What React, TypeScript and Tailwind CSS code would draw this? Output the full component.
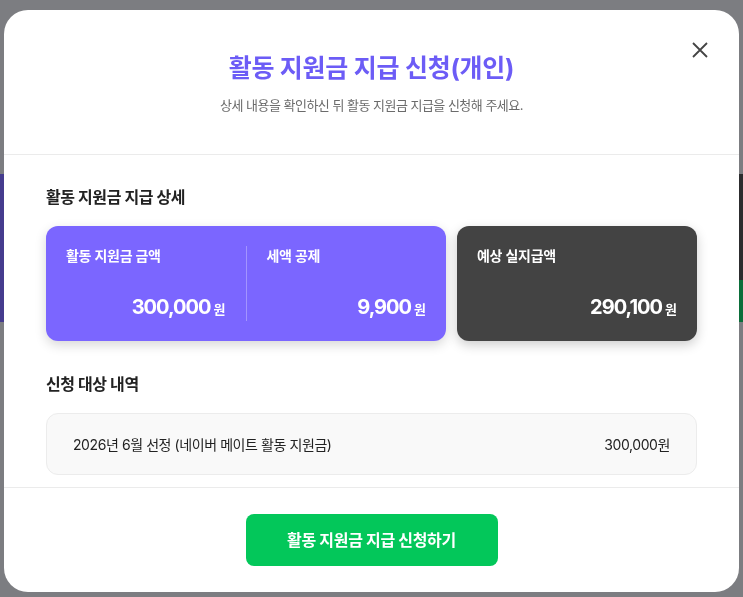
import { useState } from "react";

const font = { fontFamily: 'Inter, "Noto Sans CJK KR", sans-serif' };

function Amount({ value }: { value: string }) {
    return (
        <div className="flex items-baseline justify-end">
            <span className="text-[20px] font-bold tracking-[-0.05em] leading-7">{value}</span>
            <span className="ml-[3px] text-[13px] font-semibold">원</span>
        </div>
    );
}

export default function App() {
    const [open, setOpen] = useState(true);

    return (
        <div className="relative h-screen overflow-hidden bg-[#7c7d81]" style={font}>
            {/* dimmed page behind the modal */}
            <div className="mt-[174px] flex h-[148px]">
                <div className="flex-1 bg-[#453c8e]" />
                <div className="flex flex-1 flex-col bg-[#2c2c2e]">
                    <div className="flex-1" />
                    <div className="h-[42px] bg-[#0b6e3a]" />
                </div>
            </div>

            {open && (
                <div className="fixed inset-0 px-[4px] pt-[10px]">
                    <div className="flex h-[582px] w-full flex-col overflow-hidden rounded-[24px] bg-white">
                        {/* Header */}
                        <div className="relative flex h-[145px] flex-col items-center border-b border-[#ebebeb] pt-[42px]">
                            <h1 className="text-[25px] font-bold leading-8 tracking-[-0.01em] text-[#6c5cf6]">
                                활동 지원금 지급 신청(개인)
                            </h1>
                            <p className="mt-[11px] text-[13px] leading-5 tracking-[-0.04em] text-[#6b6b6b]">
                                상세 내용을 확인하신 뒤 활동 지원금 지급을 신청해 주세요.
                            </p>
                            <button
                                onClick={() => setOpen(false)}
                                className="absolute right-[27px] top-[28px] flex h-6 w-6 items-center justify-center text-[#444]"
                            >
                                <svg width="16" height="16" viewBox="0 0 16 16" fill="none" stroke="currentColor" strokeWidth="1.8">
                                    <path d="M1 1L15 15M15 1L1 15" />
                                </svg>
                            </button>
                        </div>

                        {/* Body */}
                        <div className="h-[332px] px-[42px] pt-[30px]">
                            <h2 className="text-[16px] font-bold leading-6 tracking-[-0.025em] text-[#222]">활동 지원금 지급 상세</h2>
                            <div className="mt-[17px] grid h-[115px] grid-cols-[5fr_3fr] gap-[11px] text-white">
                                <div className="flex rounded-xl bg-[#7b66ff] py-5 shadow-[0_4px_12px_rgba(0,0,0,0.16)]">
                                    <div className="flex flex-1 flex-col justify-between px-5">
                                        <span className="text-[14px] font-semibold leading-5 tracking-[-0.02em]">활동 지원금 금액</span>
                                        <Amount value="300,000" />
                                    </div>
                                    <div className="w-px bg-white/30" />
                                    <div className="flex flex-1 flex-col justify-between px-5">
                                        <span className="text-[14px] font-semibold leading-5 tracking-[-0.02em]">세액 공제</span>
                                        <Amount value="9,900" />
                                    </div>
                                </div>
                                <div className="flex flex-col justify-between rounded-xl bg-[#434343] px-5 py-5 shadow-[0_4px_12px_rgba(0,0,0,0.2)]">
                                    <span className="text-[14px] font-semibold leading-5 tracking-[-0.02em]">예상 실지급액</span>
                                    <Amount value="290,100" />
                                </div>
                            </div>

                            <h2 className="mt-[31px] text-[16px] font-bold leading-6 tracking-[-0.025em] text-[#222]">신청 대상 내역</h2>
                            <div className="mt-[17px] flex h-[62px] items-center justify-between rounded-xl border border-[#ececec] bg-[#f9f9f9] px-[26px] text-[14px] tracking-[-0.03em] text-[#222]">
                                <span>2026년 6월 선정 (네이버 메이트 활동 지원금)</span>
                                <span>300,000원</span>
                            </div>
                        </div>

                        {/* Footer */}
                        <div className="flex flex-1 items-center justify-center border-t border-[#ebebeb]">
                            <button className="h-[52px] w-[252px] rounded-lg bg-[#03c75a] text-[16px] font-bold tracking-[-0.02em] text-white">
                                활동 지원금 지급 신청하기
                            </button>
                        </div>
                    </div>
                </div>
            )}
        </div>
    );
}
